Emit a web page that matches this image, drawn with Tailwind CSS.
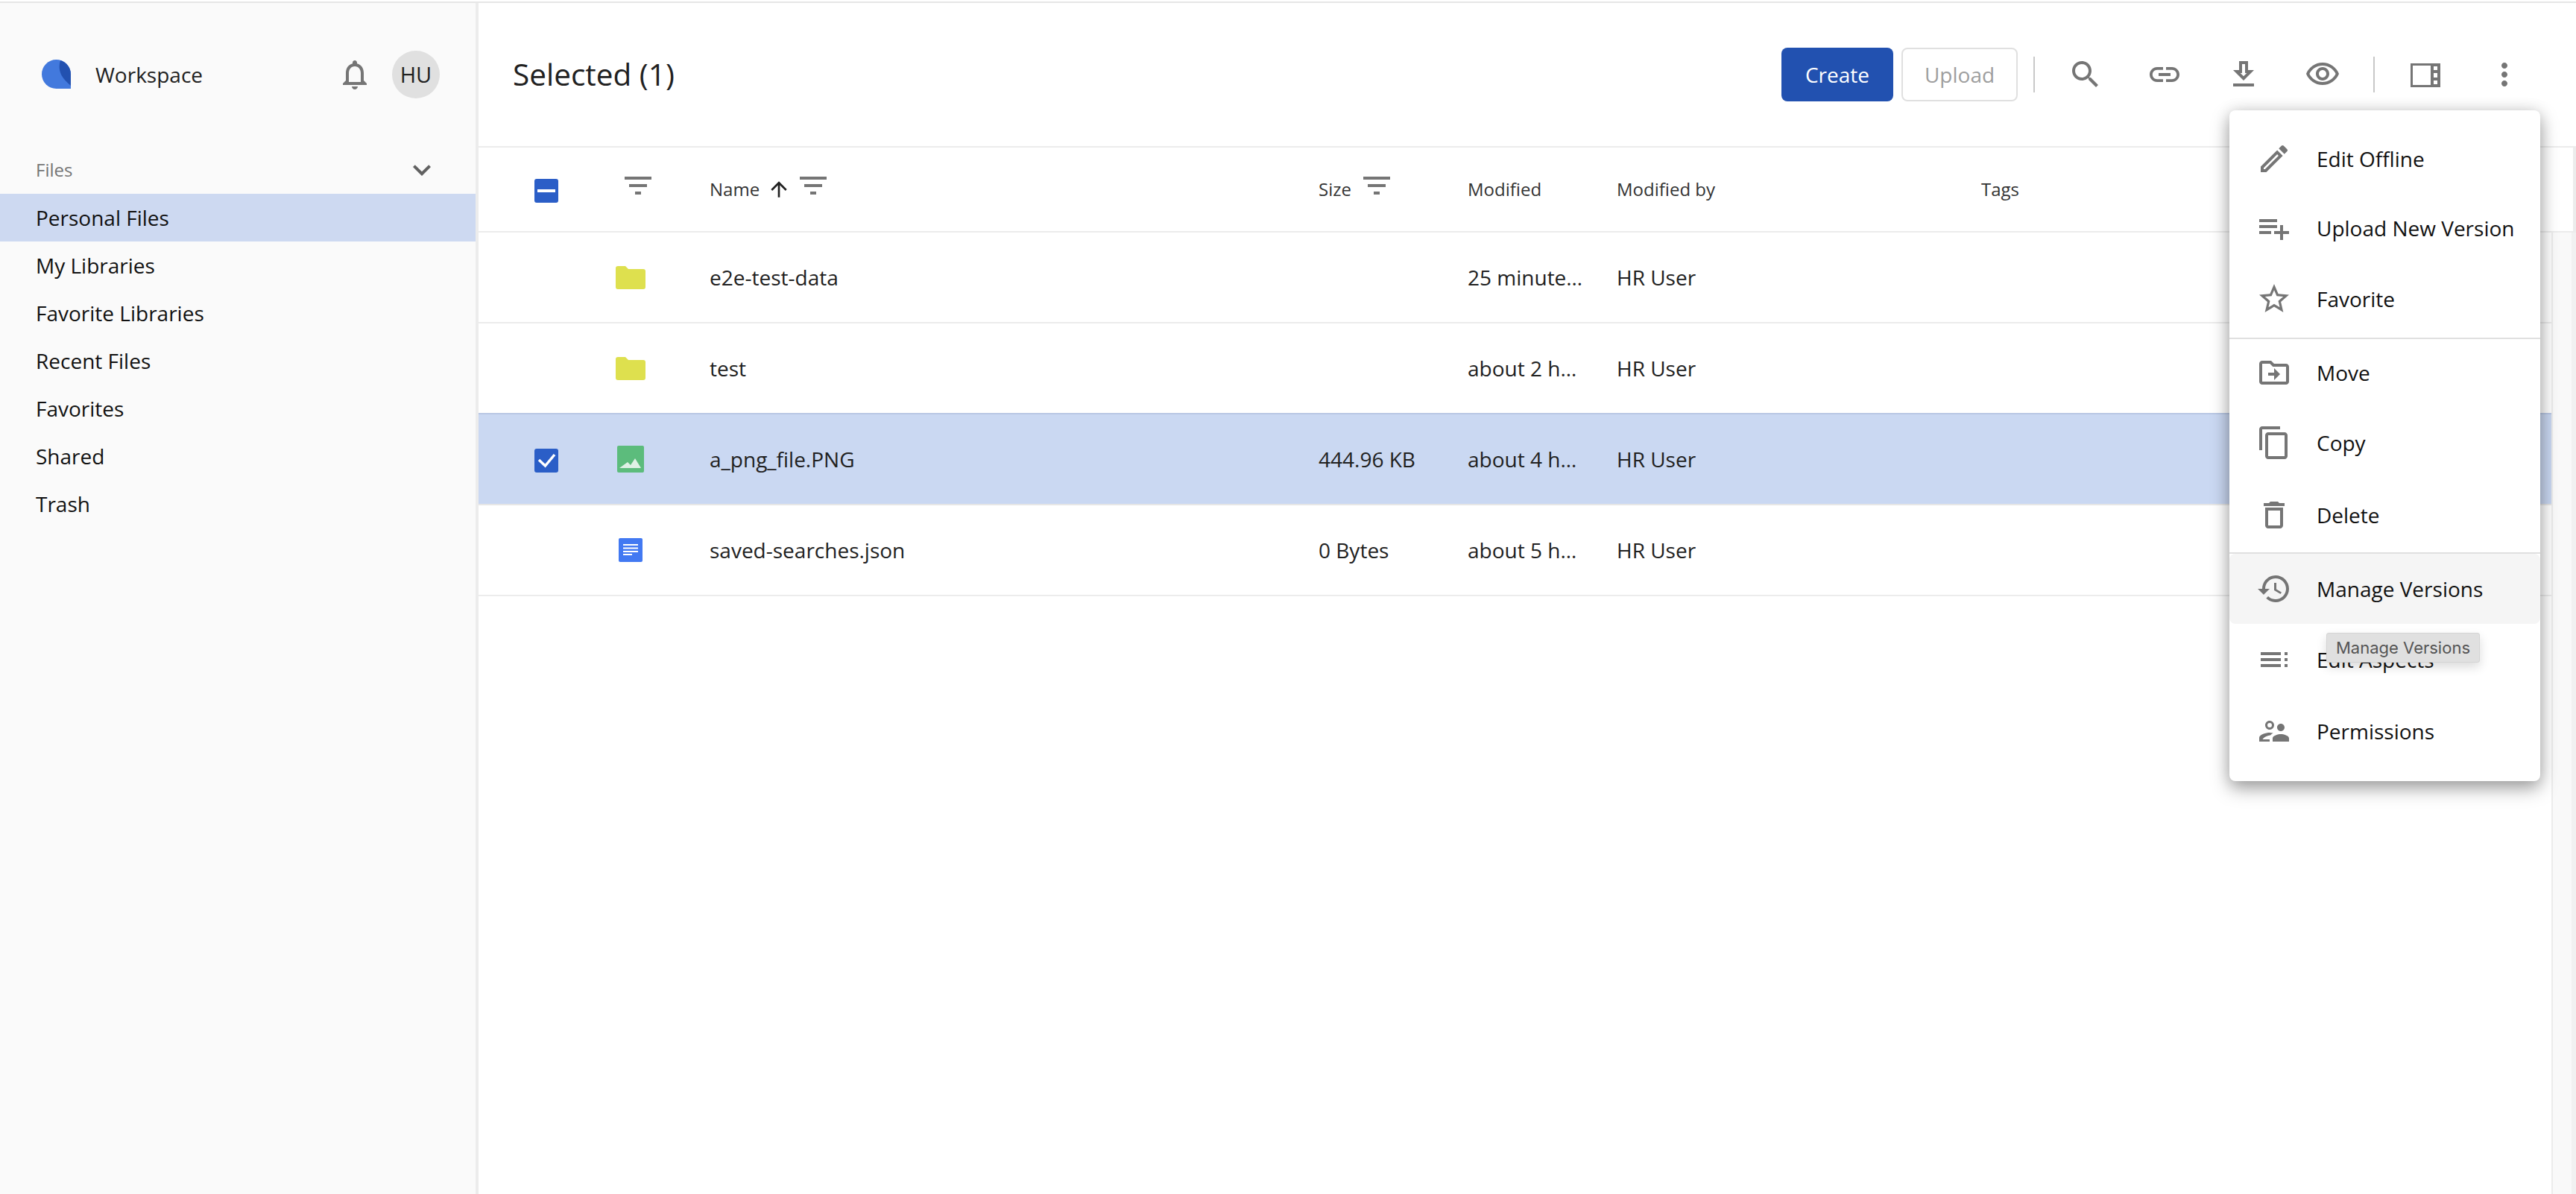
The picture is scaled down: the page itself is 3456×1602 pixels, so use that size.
<!DOCTYPE html>
<html>
<head>
<meta charset="utf-8">
<script src="https://cdn.jsdelivr.net/npm/@tailwindcss/browser@4"></script>
</head>
<body class="m-0 bg-white font-['Open_Sans','Noto_Sans',sans-serif] text-[28px] text-[#212121]">
<div class="relative h-[1602px] w-[3456px] overflow-hidden">
  <div class="flex h-full w-full flex-col pt-[2px]">
    <div class="h-[2px] w-full shrink-0 bg-[#e6e6e6]"></div>
    <div class="flex min-h-0 flex-1">
      <!-- Sidebar -->
      <aside class="flex w-[642px] shrink-0 flex-col border-r-[4px] border-[#ececec] bg-[#fafafa]">
        <div class="flex h-[192px] items-center pl-[56px] pr-[48px]">
          <svg class="h-[40px] w-[40px]" viewBox="0 0 40 40"><path d="M19.500 0A19.500 19.500 0 0 0 19.500 39H39V19.500A19.500 19.500 0 0 0 19.500 0Z" fill="#4279dd"/><path d="M25 1A19.500 19.500 0 0 1 39 19.500V35C30 27 20 18 25 1Z" fill="#2251b0"/></svg>
          <span class="ml-[32px] text-[28px] leading-[40px]">Workspace</span>
          <svg class="ml-auto h-[48px] w-[48px] text-[#757575]" viewBox="0 0 24 24" fill="currentColor"><path d="M12 22c1.100 0 2-.9 2-2h-4c0 1.100.9 2 2 2zm6-6v-5c0-3.070-1.630-5.640-4.500-6.320V4c0-.83-.67-1.500-1.500-1.500s-1.500.67-1.500 1.500v.68C7.640 5.360 6 7.920 6 11v5l-2 2v1h16v-1l-2-2zm-2 1H8v-6c0-2.480 1.510-4.500 4-4.500s4 2.020 4 4.500v6z"/></svg>
          <div class="ml-[26px] flex h-[64px] w-[64px] items-center justify-center rounded-full bg-[#e0e0e0] text-[29px]">HU</div>
        </div>
        <div class="flex h-[64px] items-center justify-between pl-[48px] pr-[48px]">
          <span class="text-[24px] text-[#757575]">Files</span>
          <svg class="h-[48px] w-[48px] text-[#616161]" viewBox="0 0 24 24" fill="currentColor"><path d="M7.410 8.590 12 13.170l4.590-4.580L18 10l-6 6-6-6z"/></svg>
        </div>
        <nav class="flex flex-col text-[28px]">
          <a class="flex h-[64px] items-center bg-[#cdd9f1] pl-[48px] text-[#111]">Personal Files</a>
          <a class="flex h-[64px] items-center pl-[48px] text-[#111]">My Libraries</a>
          <a class="flex h-[64px] items-center pl-[48px] text-[#111]">Favorite Libraries</a>
          <a class="flex h-[64px] items-center pl-[48px] text-[#111]">Recent Files</a>
          <a class="flex h-[64px] items-center pl-[48px] text-[#111]">Favorites</a>
          <a class="flex h-[64px] items-center pl-[48px] text-[#111]">Shared</a>
          <a class="flex h-[64px] items-center pl-[48px] text-[#111]">Trash</a>
        </nav>
      </aside>
      <!-- Main -->
      <main class="flex min-w-0 flex-1 flex-col">
        <header class="flex h-[194px] shrink-0 items-center border-b-[2px] border-[#ececec] pl-[46px] pr-[72px]">
          <h1 class="mb-[1px] text-[40.500px] leading-[56px] font-normal text-[#212121]">Selected (1)</h1>
          <div class="ml-auto flex items-center">
            <button class="h-[72px] w-[150px] rounded-[8px] bg-[#2251b0] text-[28px] text-white">Create</button>
            <button class="ml-[11px] h-[72px] w-[156px] rounded-[8px] border-[2px] border-[#e0e0e0] text-[28px] text-[#9e9e9e]">Upload</button>
            <div class="ml-[21px] h-[48px] w-[2px] bg-[#c8c8c8]"></div>
            <div class="ml-[44px] flex gap-[58px] text-[#757575]">
              <svg class="h-[48px] w-[48px]" viewBox="0 0 24 24" fill="currentColor"><path d="M15.500 14h-.79l-.28-.27C15.410 12.590 16 11.110 16 9.500 16 5.910 13.090 3 9.500 3S3 5.910 3 9.500 5.910 16 9.500 16c1.610 0 3.090-.59 4.230-1.570l.27.28v.79l5 4.990L20.490 19l-4.990-5zm-6 0C7.010 14 5 11.990 5 9.500S7.010 5 9.500 5 14 7.010 14 9.500 11.990 14 9.500 14z"/></svg>
              <svg class="h-[48px] w-[48px]" viewBox="0 0 24 24" fill="currentColor"><path d="M3.900 12c0-1.710 1.390-3.100 3.100-3.100h4V7H7c-2.760 0-5 2.240-5 5s2.240 5 5 5h4v-1.900H7c-1.710 0-3.100-1.390-3.100-3.100zM8 13h8v-2H8v2zm9-6h-4v1.900h4c1.710 0 3.100 1.390 3.100 3.100s-1.390 3.100-3.100 3.100h-4V17h4c2.760 0 5-2.240 5-5s-2.240-5-5-5z"/></svg>
              <svg class="h-[48px] w-[48px]" viewBox="0 0 24 24" fill="currentColor"><path d="M19 9h-4V3H9v6H5l7 7 7-7zm-8 2V5h2v6h1.170L12 13.170 9.830 11H11zm-6 7h14v2H5z"/></svg>
              <svg class="h-[48px] w-[48px]" viewBox="0 0 24 24" fill="currentColor"><path d="M12 6c3.790 0 7.170 2.130 8.820 5.500C19.170 14.870 15.790 17 12 17s-7.170-2.130-8.820-5.500C4.830 8.130 8.210 6 12 6m0-2C7 4 2.730 7.110 1 11.500 2.730 15.890 7 19 12 19s9.270-3.110 11-7.500C21.270 7.110 17 4 12 4zm0 5c1.380 0 2.500 1.120 2.500 2.500S13.380 14 12 14s-2.500-1.120-2.500-2.500S10.620 9 12 9m0-2c-2.480 0-4.500 2.020-4.500 4.500S9.520 16 12 16s4.500-2.020 4.500-4.500S14.480 7 12 7z"/></svg>
            </div>
            <div class="ml-[44px] h-[48px] w-[2px] bg-[#c8c8c8]"></div>
            <div class="ml-[44px] flex gap-[58px] text-[#757575]">
              <svg class="h-[48px] w-[48px]" viewBox="0 0 48 48" fill="currentColor"><path fill-rule="evenodd" d="M4 9h40v32H4zM7 12v26h24V12zM35 13v5h5v-5zM35 22v6h5v-6zM35 32v5h5v-5z"/></svg>
              <svg class="h-[48px] w-[48px]" viewBox="0 0 24 24" fill="currentColor"><path d="M12 8c1.100 0 2-.9 2-2s-.9-2-2-2-2 .9-2 2 .9 2 2 2zm0 2c-1.100 0-2 .9-2 2s.9 2 2 2 2-.9 2-2-.9-2-2-2zm0 6c-1.100 0-2 .9-2 2s.9 2 2 2 2-.9 2-2-.9-2-2-2z"/></svg>
            </div>
          </div>
        </header>
        <!-- Table -->
        <div class="flex min-h-0 flex-1">
          <div class="flex min-w-0 flex-1 flex-col">
            <div class="flex h-[114px] shrink-0 items-center border-r-[4px] border-b-[2px] border-[#ececec] pr-[30px] text-[24px] text-[#333]">
              <div class="w-[142px] shrink-0 pl-[75px]">
                <span class="mt-[4px] flex h-[32px] w-[32px] items-center justify-center rounded-[3px] bg-[#2b5ec7]"><span class="h-[4px] w-[24px] bg-white"></span></span>
              </div>
              <div class="w-[168px] shrink-0 pl-[48px]"><svg class="mb-[6px] h-[48px] w-[48px] text-[#757575]" viewBox="0 0 24 24" fill="currentColor"><path d="M3 5h18v2H3zM6 10h12v2H6zM10 15h4v2h-4z"/></svg></div>
              <div class="flex w-[817px] shrink-0 items-center">
                <span>Name</span>
                <svg class="ml-[10px] h-[32px] w-[32px] text-[#212121]" viewBox="0 0 24 24" fill="currentColor"><path d="M4 12l1.410 1.410L11 7.830V20h2V7.830l5.580 5.590L20 12l-8-8-8 8z"/></svg>
                <svg class="mb-[6px] ml-[6px] h-[48px] w-[48px] text-[#757575]" viewBox="0 0 24 24" fill="currentColor"><path d="M3 5h18v2H3zM6 10h12v2H6zM10 15h4v2h-4z"/></svg>
              </div>
              <div class="flex w-[200px] shrink-0 items-center"><span>Size</span><svg class="mb-[6px] ml-[10px] h-[48px] w-[48px] text-[#757575]" viewBox="0 0 24 24" fill="currentColor"><path d="M3 5h18v2H3zM6 10h12v2H6zM10 15h4v2h-4z"/></svg></div>
              <div class="w-[200px] shrink-0">Modified</div>
              <div class="w-[489px] shrink-0">Modified by</div>
              <div>Tags</div>
            </div>
            <div class="flex min-h-0 flex-1">
              <div class="min-w-0 flex-1 border-r-[2px] border-[#ececec]">
                <div class="flex h-[122px] items-center border-b-[2px] border-[#ececec]">
                  <div class="w-[142px] shrink-0"></div>
                  <div class="w-[168px] shrink-0 pl-[38px]"><svg class="mt-[2px] h-[48px] w-[48px]" viewBox="0 0 48 48"><path d="M4 11c0-2 1-3 3-3h10l4 4h20c2 0 3 1 3 3v21c0 2-1 3-3 3H7c-2 0-3-1-3-3z" fill="#dee04e"/></svg></div>
                  <div class="w-[817px] shrink-0">e2e-test-data</div>
                  <div class="w-[200px] shrink-0"></div>
                  <div class="w-[200px] shrink-0">25 minute…</div>
                  <div>HR User</div>
                </div>
                <div class="flex h-[122px] items-center border-b-[2px] border-[#b9c8e4]">
                  <div class="w-[142px] shrink-0"></div>
                  <div class="w-[168px] shrink-0 pl-[38px]"><svg class="mt-[2px] h-[48px] w-[48px]" viewBox="0 0 48 48"><path d="M4 11c0-2 1-3 3-3h10l4 4h20c2 0 3 1 3 3v21c0 2-1 3-3 3H7c-2 0-3-1-3-3z" fill="#dee04e"/></svg></div>
                  <div class="w-[817px] shrink-0">test</div>
                  <div class="w-[200px] shrink-0"></div>
                  <div class="w-[200px] shrink-0">about 2 h…</div>
                  <div>HR User</div>
                </div>
                <div class="flex h-[122px] items-center border-b-[2px] border-[#e6e6e6] bg-[#cad8f2]">
                  <div class="w-[142px] shrink-0 pl-[75px]">
                    <span class="mt-[4px] block h-[32px] w-[32px] rounded-[3px] bg-[#2b5ec7]"><svg class="h-[32px] w-[32px]" viewBox="0 0 32 32" fill="none" stroke="#fff" stroke-width="3.500"><path d="M6 15l8.500 8L27 8"/></svg></span>
                  </div>
                  <div class="w-[168px] shrink-0 pl-[38px]"><svg class="h-[48px] w-[48px]" viewBox="0 0 48 48"><rect x="6" y="6" width="36" height="36" rx="2" fill="#5cbc7c"/><path d="M9 36l11-8 4 4 6-9 8 13z" fill="#dff1e5"/></svg></div>
                  <div class="w-[817px] shrink-0">a_png_file.PNG</div>
                  <div class="w-[200px] shrink-0">444.96 KB</div>
                  <div class="w-[200px] shrink-0">about 4 h…</div>
                  <div>HR User</div>
                </div>
                <div class="flex h-[122px] items-center border-b-[2px] border-[#ececec]">
                  <div class="w-[142px] shrink-0"></div>
                  <div class="w-[168px] shrink-0 pl-[38px]"><svg class="h-[48px] w-[48px]" viewBox="0 0 48 48"><rect x="8" y="8" width="32" height="32" rx="2" fill="#4279f2"/><path d="M14 16h20v2H14zM14 20.500h20v2H14zM14 25h20v2H14zM14 29h12v2H14z" fill="#fff"/></svg></div>
                  <div class="w-[817px] shrink-0">saved-searches.json</div>
                  <div class="w-[200px] shrink-0">0 Bytes</div>
                  <div class="w-[200px] shrink-0">about 5 h…</div>
                  <div>HR User</div>
                </div>
              </div>
              <div class="w-[31px] shrink-0 border-r-[6px] border-[#f1f1f1] bg-[#f9f9f9]"></div>
            </div>
          </div>
        </div>
      </main>
    </div>
  </div>

  <!-- Context menu -->
  <div class="absolute left-[2991px] top-[148px] flex w-[417px] flex-col rounded-[8px] bg-white text-[28px] text-[#111] shadow-[0_10px_24px_rgba(0,0,0,0.35),0_0_20px_rgba(0,0,0,0.12)]">
    <div class="flex flex-col pt-[18px]">
      <div class="flex h-[93px] items-center"><div class="ml-[36px] h-[48px] w-[48px] text-[#757575]"><svg class="h-full w-full" viewBox="0 0 24 24" fill="currentColor"><path d="M14.060 9.020l.92.92L5.920 19H5v-.92l9.060-9.060M17.660 3c-.25 0-.51.1-.7.29l-1.830 1.830 3.750 3.750 1.830-1.830c.39-.39.39-1.020 0-1.410l-2.340-2.340c-.2-.2-.45-.29-.71-.29zm-3.600 3.190L3 17.250V21h3.750L17.810 9.940l-3.750-3.750z"/></svg></div><span class="ml-[33px]">Edit Offline</span></div>
      <div class="flex h-[94px] items-center"><div class="ml-[36px] h-[48px] w-[48px] text-[#757575]"><svg class="h-full w-full" viewBox="0 0 24 24" fill="currentColor"><path d="M14 10H2v2h12v-2zm0-4H2v2h12V6zm4 8v-4h-2v4h-4v2h4v4h2v-4h4v-2h-4zM2 16h8v-2H2v2z"/></svg></div><span class="ml-[33px]">Upload New Version</span></div>
      <div class="flex h-[96px] items-center"><div class="ml-[36px] h-[48px] w-[48px] text-[#757575]"><svg class="h-full w-full" viewBox="0 0 24 24" fill="currentColor"><path d="M22 9.240l-7.190-.62L12 2 9.190 8.630 2 9.240l5.460 4.730L5.820 21 12 17.270 18.180 21l-1.630-7.030L22 9.240zM12 15.400l-3.760 2.270 1-4.280-3.320-2.880 4.380-.38L12 6.100l1.710 4.040 4.380.38-3.320 2.880 1 4.280L12 15.400z"/></svg></div><span class="ml-[33px]">Favorite</span></div>
    </div>
    <div class="mt-[4px] h-[2px] bg-[#e0e0e0]"></div>
    <div class="flex flex-col">
      <div class="flex h-[90px] items-center"><div class="ml-[36px] h-[48px] w-[48px] text-[#757575]"><svg class="h-full w-full" viewBox="0 0 24 24" fill="currentColor"><path d="M20 6h-8l-2-2H4c-1.100 0-2 .9-2 2v12c0 1.100.9 2 2 2h16c1.100 0 2-.9 2-2V8c0-1.100-.9-2-2-2zm0 12H4V6h5.170l2 2H20v10zm-8-4H8v-2h4V9l4 4-4 4v-3z"/></svg></div><span class="ml-[33px]">Move</span></div>
      <div class="flex h-[98px] items-center"><div class="ml-[36px] h-[48px] w-[48px] text-[#757575]"><svg class="h-full w-full" viewBox="0 0 24 24" fill="currentColor"><path d="M16 1H4c-1.100 0-2 .9-2 2v14h2V3h12V1zm3 4H8c-1.100 0-2 .9-2 2v14c0 1.100.9 2 2 2h11c1.100 0 2-.9 2-2V7c0-1.100-.9-2-2-2zm0 16H8V7h11v14z"/></svg></div><span class="ml-[33px]">Copy</span></div>
      <div class="flex h-[96px] items-center"><div class="ml-[36px] h-[48px] w-[48px] text-[#757575]"><svg class="h-full w-full" viewBox="0 0 24 24" fill="currentColor"><path d="M6 19c0 1.100.9 2 2 2h8c1.100 0 2-.9 2-2V7H6v12zM8 9h8v10H8V9zm7.500-5l-1-1h-5l-1 1H5v2h14V4z"/></svg></div><span class="ml-[33px]">Delete</span></div>
    </div>
    <div class="mt-[2px] h-[2px] bg-[#e0e0e0]"></div>
    <div class="flex flex-col">
      <div class="flex h-[94px] items-center rounded-[8px] bg-[#f5f5f5]"><div class="ml-[36px] h-[48px] w-[48px] text-[#757575]"><svg class="h-full w-full" viewBox="0 0 24 24" fill="currentColor"><path d="M13 3c-4.970 0-9 4.030-9 9H1l3.890 3.890.07.14L9 12H6c0-3.870 3.130-7 7-7s7 3.130 7 7-3.130 7-7 7c-1.930 0-3.680-.79-4.940-2.060l-1.420 1.420C8.270 19.990 10.510 21 13 21c4.970 0 9-4.030 9-9s-4.030-9-9-9zm-1 5v5l4.280 2.540.72-1.210-3.500-2.080V8H12z"/></svg></div><span class="ml-[33px]">Manage Versions</span></div>
      <div class="flex h-[96px] items-center"><div class="ml-[36px] h-[48px] w-[48px] text-[#757575]"><svg class="h-full w-full" viewBox="0 0 48 48" fill="currentColor"><path d="M6 14h27v4H6zM6 22h27v4H6zM6 30h27v4H6zM38 14h4v4h-4zM38 22h4v4h-4zM38 30h4v4h-4z"/></svg></div><span class="ml-[33px]">Edit Aspects</span></div>
      <div class="flex h-[96px] items-center"><div class="ml-[36px] h-[48px] w-[48px] text-[#757575]"><svg class="h-full w-full" viewBox="0 0 24 24" fill="currentColor"><path fill-rule="evenodd" d="M16.500 12c1.380 0 2.490-1.120 2.490-2.500S17.880 7 16.500 7C15.120 7 14 8.120 14 9.500s1.120 2.500 2.500 2.500zM9 11c1.660 0 2.990-1.340 2.990-3S10.660 5 9 5C7.340 5 6 6.340 6 8s1.340 3 3 3zm0-4.500a1.500 1.500 0 1 1 0 3 1.500 1.500 0 0 1 0-3zM16.500 14c-1.830 0-5.500.92-5.500 2.750V19h11v-2.250c0-1.830-3.670-2.750-5.500-2.750zM9 13c-2.330 0-7 1.170-7 3.500V19h7v-1.500H4.300c.5-1.100 3-2.500 5.200-2.700.5-.6 1.200-1.100 1.900-1.500C10.500 13.100 9.700 13 9 13z"/></svg></div><span class="ml-[33px]">Permissions</span></div>
    </div>
    <div class="h-[19px]"></div>
  </div>
  <!-- Tooltip -->
  <div class="absolute left-[3121px] top-[849px] flex h-[40px] w-[206px] items-center justify-center rounded-[3px] border border-[#d4d4d4] bg-[#e0e0e0] font-['Inter',sans-serif] text-[22px] text-[#555] shadow-[0_6px_14px_rgba(0,0,0,0.14)]">Manage Versions</div>
</div>
</body>
</html>
